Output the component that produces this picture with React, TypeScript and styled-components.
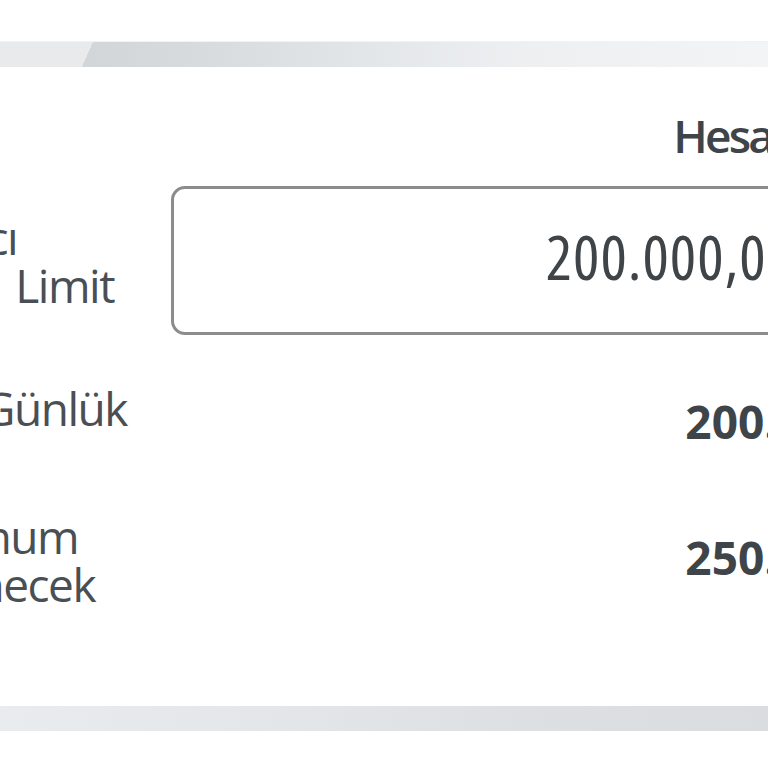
import React from "react";
import styled, { createGlobalStyle } from "styled-components";

const colors = {
	text: "#3f4449",
	label: "#4a4f55",
	border: "#8c8c8c",
};

const GlobalStyle = createGlobalStyle`
	html, body {
		margin: 0;
		padding: 0;
		background: #ffffff;
		overflow: hidden;
	}
	body {
		font-family: "Open Sans", "Noto Sans", sans-serif;
		color: ${colors.text};
	}
`;

const Page = styled.div`
	width: 768px;
	height: 768px;
	overflow: hidden;
	display: flex;
	flex-direction: column;
	background: #ffffff;
`;

const TopSpace = styled.div`
	height: 41px;
	border-bottom: 1px solid #f1f2f4;
	flex: none;
`;

const Band = styled.div<{ $bottom?: boolean }>`
	height: 25px;
	flex: none;
	background: ${(p) =>
		p.$bottom
			? "linear-gradient(90deg, #e9ecee 0px, #e3e6e9 300px, #dde0e3 520px, #dadde0 768px)"
			: "linear-gradient(114deg, #e8eaec 0 85px, transparent 85px), linear-gradient(90deg, #d3d6d9 90px, #d8dbde 200px, #e4e7ea 380px, #edeff1 520px, #f2f4f6 768px)"};
`;

const Card = styled.section`
	height: 639px;
	flex: none;
	background: #ffffff;
	overflow: hidden;
`;

const Inner = styled.div`
	margin-left: -148px;
	width: 1200px;
	display: flex;
	flex-direction: column;
`;

const Row = styled.div<{ $top: number; $center?: boolean }>`
	display: grid;
	grid-template-columns: 298px 760px;
	column-gap: 21px;
	margin-top: ${(p) => p.$top}px;
	align-items: ${(p) => (p.$center ? "center" : "start")};
`;

const Label = styled.div`
	font-size: 46px;
	line-height: 48px;
	font-weight: 400;
	font-stretch: 90%;
	letter-spacing: -1.5px;
	word-spacing: 8px;
	color: ${colors.label};
	white-space: nowrap;
	span {
		display: block;
	}
`;

const Header = styled.div`
	grid-column: 2;
	text-align: right;
	padding-right: 15px;
	font-size: 46px;
	line-height: 56px;
	font-weight: 600;
	font-stretch: 90%;
	letter-spacing: -2.8px;
	white-space: nowrap;
`;

const AmountBox = styled.div`
	box-sizing: border-box;
	height: 149px;
	border: 3px solid ${colors.border};
	border-radius: 14px;
	display: flex;
	align-items: center;
	justify-content: flex-end;
	padding: 0 134px 10px 0;
	font-size: 62px;
	line-height: 62px;
	font-weight: 400;
	font-stretch: 75%;
	letter-spacing: 1px;
	white-space: nowrap;
`;

const Value = styled.div<{ $offset: number }>`
	padding-top: ${(p) => p.$offset}px;
	padding-right: 9px;
	text-align: right;
	font-size: 46px;
	line-height: 49px;
	font-weight: 700;
	font-stretch: 90%;
	white-space: nowrap;
`;

export default function App() {
	return (
		<Page>
			<GlobalStyle />
			<TopSpace />
			<Band />
			<Card>
				<Inner>
					<Row $top={40}>
						<Header>Hesap Limiti</Header>
					</Row>
					<Row $top={23} $center>
						<Label>
							<span>Kullanıcı</span>
							<span>Günlük Limit</span>
						</Label>
						<AmountBox>200.000,00</AmountBox>
					</Row>
					<Row $top={49}>
						<Label>
							<span>Kalan Günlük</span>
						</Label>
						<Value $offset={13}>200.000,00</Value>
					</Row>
					<Row $top={66}>
						<Label>
							<span>Maksimum</span>
							<span>Belirlenecek</span>
						</Label>
						<Value $offset={21}>250.000,00</Value>
					</Row>
				</Inner>
			</Card>
			<Band $bottom />
		</Page>
	);
}
